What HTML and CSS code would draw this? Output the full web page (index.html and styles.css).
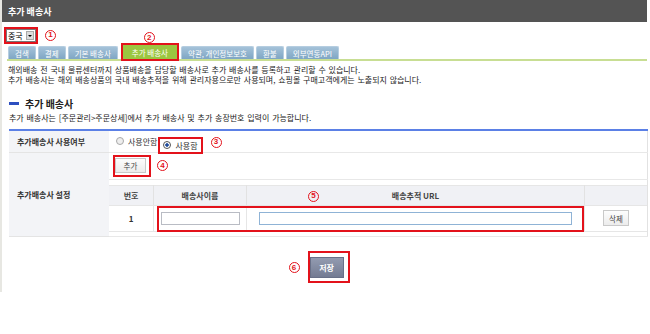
FILE: index.html
```html
<!DOCTYPE html>
<html>
<head>
<meta http-equiv="Content-Type" content="text/html; charset=UTF-8">
<link rel="stylesheet" href="styles.css">
</head>
<body>
<div class="frame">
  <div class="titlebar">추가 배송사</div>
  <div class="content">
    <div class="lang-row">
      <span class="mark mark-lang">
        <span class="select"><span class="select-value">중국</span><span class="select-btn"></span></span>
      </span>
      <span class="num num-lang">1</span>
    </div>

    <div class="tabs">
      <span class="tab">검색</span>
      <span class="tab">결제</span>
      <span class="tab">기본 배송사</span>
      <span class="mark mark-tab">
        <span class="tab tab-on">추가 배송사</span>
        <span class="num num-tab">2</span>
      </span>
      <span class="tab">약관, 개인정보보호</span>
      <span class="tab">환불</span>
      <span class="tab">외부연동API</span>
    </div>

    <p class="intro">
      해외배송 전 국내 물류센터까지 상품배송을 담당할 배송사로 추가 배송사를 등록하고 관리할 수 있습니다.<br>
      추가 배송사는 해외 배송상품의 국내 배송추적을 위해 관리자용으로만 사용되며, 쇼핑몰 구매고객에게는 노출되지 않습니다.
    </p>

    <h2 class="section-title"><span class="bar"></span>추가 배송사</h2>
    <p class="section-desc">추가 배송사는 [주문관리&gt;주문상세]에서 추가 배송사 및 추가 송장번호 입력이 가능합니다.</p>

    <table class="form-table">
      <tr class="row-use">
        <th>추가배송사 사용여부</th>
        <td>
          <div class="radios">
            <label class="radio"><input type="radio" name="use">사용안함</label>
            <span class="mark mark-radio"><label class="radio"><input type="radio" name="use" checked>사용함</label></span>
            <span class="num num-radio">3</span>
          </div>
        </td>
      </tr>
      <tr class="row-add">
        <th rowspan="2">추가배송사 설정</th>
        <td>
          <div class="add-line">
            <span class="mark mark-add"><button class="btn">추가</button></span>
            <span class="num num-add">4</span>
          </div>
        </td>
      </tr>
      <tr class="row-list">
        <td class="list-cell">
          <div class="list-wrap">
            <table class="list-table">
              <tr>
                <th class="col-no">번호</th>
                <th class="col-name">배송사이름</th>
                <th class="col-url">배송추적 URL</th>
                <th class="col-del"></th>
              </tr>
              <tr>
                <td>1</td>
                <td><input class="text-in in-name" type="text"></td>
                <td><input class="text-in in-url" type="text"></td>
                <td><button class="btn btn-del">삭제</button></td>
              </tr>
            </table>
            <span class="mark-box"></span>
            <span class="num num-list">5</span>
          </div>
        </td>
      </tr>
    </table>

    <div class="actions">
      <span class="num num-save">6</span>
      <span class="mark mark-save"><button class="btn-save">저장</button></span>
    </div>
  </div>
</div>
</body>
</html>
```

FILE: styles.css
```css
body {
    margin: 0;
    font-family: "Noto Sans CJK KR", "Noto Sans", sans-serif;
    font-size: 8px;
    color: #333;
    background: #fff;
}
table {
    font-size: inherit;
}

.frame {
    width: 645px;
    height: 292px;
    border-left: 2px solid #e7e7e2;
}

.titlebar {
    height: 22px;
    background-color: #545454;
    color: #fff;
    font-weight: bold;
    font-size: 9px;
    padding-left: 6px;
    display: flex;
    align-items: center;
}

.content {
    padding: 5px 0 0 5px;
}

/* red annotation boxes + numbers */
.mark {
    border: 2px solid #e3121b;
    display: inline-flex;
    align-items: center;
}
.num {
    display: inline-flex;
    align-items: center;
    justify-content: center;
    width: 9px;
    height: 9px;
    border: 1px solid #e3121b;
    border-radius: 50%;
    color: #e3121b;
    font-family: "Liberation Sans", sans-serif;
    font-weight: bold;
    font-size: 8px;
    line-height: 1;
}

/* language select */
.lang-row {
    display: flex;
    align-items: center;
    height: 16px;
}
.mark-lang {
    margin-left: -3px;
}
.select {
    display: flex;
    align-items: center;
    height: 11px;
    width: 28px;
    border: 1px solid #777;
    background: #fff;
}
.select-value {
    flex: 1;
    padding-left: 1px;
    font-size: 8px;
    color: #000;
    line-height: 11px;
}
.select-btn {
    width: 8px;
    height: 9px;
    margin-right: 1px;
    background: #dcdcdc;
    border: 1px solid #aaa;
    box-sizing: border-box;
    position: relative;
}
.select-btn::after {
    content: "";
    position: absolute;
    left: 1px;
    top: 3px;
    border-left: 2px solid transparent;
    border-right: 2px solid transparent;
    border-top: 2px solid #000;
}
.num-lang {
    margin-left: 7px;
}

/* tabs */
.tabs {
    display: flex;
    align-items: flex-end;
    margin-top: 0;
    padding-left: 1px;
    border-bottom: 2px solid #c8de93;
    height: 16px;
    font-size: 7.5px;
}
.tab {
    height: 13px;
    padding: 0 6px;
    margin-right: 2px;
    display: flex;
    align-items: center;
    color: #fff;
    background: linear-gradient(#a4c2d9, #7fa6c4);
    border: 1px solid #b5cde0;
    border-bottom: none;
    border-radius: 2px 2px 0 0;
    box-sizing: border-box;
    white-space: nowrap;
}
.mark-tab {
    position: relative;
    margin: 0 2px -2px 1px;
}
.mark-tab .tab {
    margin: 0;
    height: 14px;
    padding: 0 9px;
    background: #9bc640;
    border: none;
    border-radius: 0;
}
.num-tab {
    position: absolute;
    left: 21px;
    top: -13px;
}

/* intro text */
.intro {
    margin: 4px 0 0 1px;
    line-height: 10px;
    word-spacing: 1px;
    color: #222;
}

.section-title {
    margin: 12px 0 0 2px;
    font-size: 10px;
    font-weight: bold;
    color: #222;
    display: flex;
    align-items: center;
    height: 13px;
}
.section-title .bar {
    width: 10px;
    height: 3px;
    background: #2d4fc0;
    margin-right: 6px;
}
.section-desc {
    margin: 3px 0 0 2px;
    line-height: 10px;
    word-spacing: 1px;
    color: #222;
}

/* form table */
.form-table {
    margin: 6px 0 0 2px;
    width: 639px;
    border-collapse: collapse;
    border-top: 2px solid #5b80e6;
    border-right: 1px solid #e2e2e2;
}
.form-table > tbody > tr > th {
    width: 92px;
    padding: 0 0 0 8px;
    background: #f3f4f7;
    text-align: left;
    font-weight: bold;
    color: #333;
    border-bottom: 1px solid #e4e4e4;
}
.form-table > tbody > tr > td {
    padding: 0;
    border-bottom: 1px solid #e8e8e8;
}
.row-use {
    height: 22px;
}
.row-add {
    height: 27px;
}

.radios {
    display: flex;
    align-items: center;
    padding-left: 7px;
}
.radio {
    display: flex;
    align-items: center;
    color: #333;
}
.radio input {
    appearance: none;
    width: 8px;
    height: 8px;
    margin: 0 4px 0 0;
    border: 1px solid #a8a8a8;
    border-radius: 50%;
    background: #eee;
    box-sizing: border-box;
}
.radio input:checked {
    border-color: #555;
    background: radial-gradient(circle, #1d3f8a 0, #2c5aa8 1.5px, #fff 2px);
}
.mark-radio {
    margin: 4px 0 -4px 1px;
    padding: 1px 3px 1px 3px;
}
.num-radio {
    margin-left: 8px;
    margin-top: 2px;
}

.add-line {
    display: flex;
    align-items: center;
    padding-left: 4px;
}
.mark-add {
    padding: 1px 3px 2px 0;
}
.btn {
    font-family: inherit;
    font-size: 7.5px;
    color: #444;
    height: 15px;
    width: 31px;
    padding: 0;
    border: 1px solid #c9c9c9;
    background: linear-gradient(#fdfdfd, #ececec);
}
.num-add {
    margin-left: 6px;
}

/* list */
.form-table > tbody > tr > td.list-cell {
    padding: 5px 0 4px 0;
}
.list-wrap {
    position: relative;
}
.list-table {
    width: 100%;
    border-collapse: collapse;
    border-top: 1px solid #e6e6e6;
    border-bottom: 1px solid #e6e6e6;
}
.list-table th {
    height: 19px;
    padding: 0;
    background: #f0f1f5;
    font-weight: bold;
    color: #444;
    border-left: 1px solid #e2e2e2;
    border-bottom: 1px solid #e6e6e6;
}
.list-table td {
    height: 25px;
    padding: 0;
    text-align: center;
    font-weight: bold;
    color: #333;
    border-left: 1px solid #e6e6e6;
}
.list-table tr > :first-child {
    border-left: none;
}
.col-no {
    width: 44px;
}
.col-name {
    width: 92px;
}
.col-url {
    width: 337px;
}
.text-in {
    height: 13px;
    padding: 0;
    box-sizing: border-box;
    border: 1px solid #b9bcc4;
    background: #fff;
    vertical-align: middle;
}
.in-name {
    width: 79px;
}
.in-url {
    width: 313px;
    border-color: #8fb3d6;
}
.btn-del {
    width: 26px;
    height: 16px;
    font-weight: normal;
    vertical-align: middle;
}
.mark-box {
    position: absolute;
    left: 48px;
    top: 21px;
    width: 423px;
    height: 22px;
    border: 2px solid #e3121b;
}
.num-list {
    position: absolute;
    left: 199px;
    top: 6px;
}

/* save */
.actions {
    display: flex;
    align-items: center;
    justify-content: center;
    margin-top: 14px;
    padding-right: 16px;
}
.num-save {
    margin-right: 8px;
    margin-top: 2px;
}
.mark-save {
    padding: 4px 4px 3px 0;
}
.btn-save {
    width: 34px;
    height: 21px;
    padding: 0;
    font-family: inherit;
    font-size: 8px;
    font-weight: bold;
    color: #fff;
    border: 1px solid #687088;
    background: linear-gradient(#939bb0, #737b93);
}
```
